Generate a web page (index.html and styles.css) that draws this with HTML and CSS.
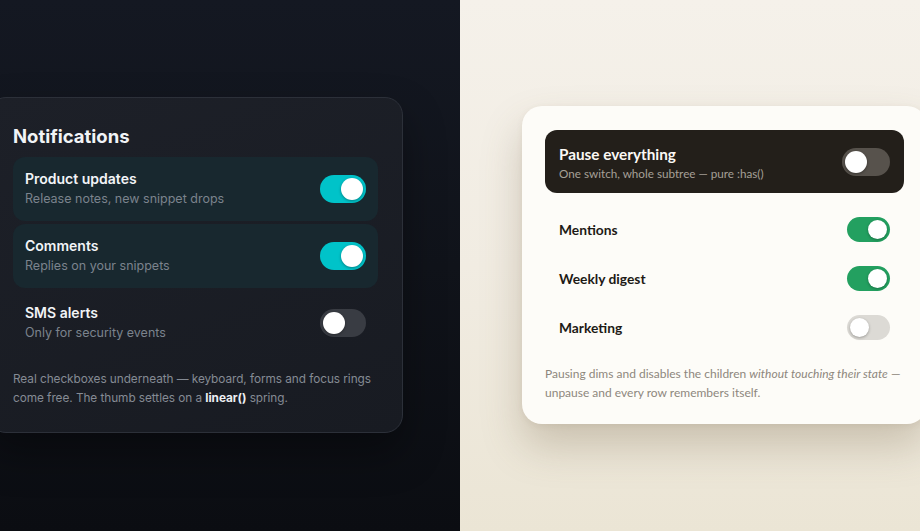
FILE: index.html
```html
<!DOCTYPE html>
<html>
<head>
<meta charset="utf-8">
<link rel="stylesheet" href="styles.css">
</head>
<body>
<main class="stage">
  <section class="panel panel-dark">
    <div class="card-dark">
      <h2 class="title">Notifications</h2>
      <div class="rows">
        <div class="row row-on">
          <div class="row-text">
            <div class="label">Product updates</div>
            <div class="desc">Release notes, new snippet drops</div>
          </div>
          <span class="sw sw-teal on"><span class="thumb"></span></span>
        </div>
        <div class="row row-on">
          <div class="row-text">
            <div class="label">Comments</div>
            <div class="desc">Replies on your snippets</div>
          </div>
          <span class="sw sw-teal on"><span class="thumb"></span></span>
        </div>
        <div class="row">
          <div class="row-text">
            <div class="label">SMS alerts</div>
            <div class="desc">Only for security events</div>
          </div>
          <span class="sw sw-teal"><span class="thumb"></span></span>
        </div>
      </div>
      <p class="note">Real checkboxes underneath — keyboard, forms and focus rings come free. The thumb settles on a <b class="code">linear()</b> spring.</p>
    </div>
  </section>
  <section class="panel panel-light">
    <div class="card-light">
      <div class="master">
        <div class="row-text">
          <div class="m-label">Pause everything</div>
          <div class="m-desc">One switch, whole subtree — pure :has()</div>
        </div>
        <span class="sw sw-master"><span class="thumb"></span></span>
      </div>
      <div class="lrows">
        <div class="lrow"><span class="l-label">Mentions</span><span class="sw sw-green on"><span class="thumb"></span></span></div>
        <div class="lrow"><span class="l-label">Weekly digest</span><span class="sw sw-green on"><span class="thumb"></span></span></div>
        <div class="lrow"><span class="l-label">Marketing</span><span class="sw sw-green"><span class="thumb"></span></span></div>
      </div>
      <p class="lnote">Pausing dims and disables the children <i>without touching their state</i> — unpause and every row remembers itself.</p>
    </div>
  </section>
</main>
</body>
</html>
```
FILE: styles.css
```css
* { box-sizing: border-box; }
html, body { margin: 0; padding: 0; }
body { width: 920px; height: 531px; overflow: hidden; }
.stage { display: grid; grid-template-columns: 460px 460px; height: 531px; }
.panel { display: flex; align-items: center; overflow: hidden; }
.panel-dark {
  background: linear-gradient(180deg, #141822 0%, #10131a 50%, #0b0d12 100%);
  font-family: Inter, "DejaVu Sans", sans-serif;
}
.panel-light {
  background: linear-gradient(180deg, #f5f1ea 0%, #f1ece2 50%, #ebe5d5 100%);
  font-family: Lato, "Open Sans", sans-serif;
}

/* dark card */
.card-dark {
  flex: none;
  width: 415px;
  margin-left: -12px;
  margin-top: -2px;
  padding: 25px 24px 23px 24px;
  background: linear-gradient(160deg, #1d2028 0%, #181b22 100%);
  border: 1px solid #2c3039;
  border-radius: 18px;
  box-shadow: 0 20px 40px rgba(0,0,0,0.35);
}
.title {
  margin: 0 0 8px;
  font-size: 18.5px;
  line-height: 26px;
  font-weight: 700;
  color: #f1f3f6;
}
.rows { display: flex; flex-direction: column; gap: 3px; }
.row {
  display: flex; align-items: center; justify-content: space-between;
  padding: 12px 12px;
  border-radius: 12px;
  height: 64px;
}
.row-on { background: #18282f; }
.label { font-size: 14px; line-height: 20px; font-weight: 600; color: #f2f4f7; }
.desc { font-size: 12.5px; line-height: 19px; color: #7b838d; }
.note {
  margin: 15px 0 0;
  font-size: 11.8px;
  letter-spacing: -0.05px;
  line-height: 19.5px;
  color: #858b94;
}
.note .code { color: #eceef2; font-weight: 700; }

/* switches */
.sw { position: relative; flex: none; display: inline-block; border-radius: 999px; }
.sw .thumb { position: absolute; top: 3px; left: 3px; border-radius: 50%; background: #fff; }
.sw-teal { width: 46px; height: 28px; background: #393c43; }
.sw-teal .thumb { width: 22px; height: 22px; box-shadow: 0 1px 3px rgba(0,0,0,0.35); }
.sw-teal.on { background: #00c3c9; }
.sw-teal.on .thumb { left: 21px; }

.sw-master { width: 48px; height: 28px; background: #57524c; }
.sw-master .thumb { width: 22px; height: 22px; box-shadow: 0 1px 3px rgba(0,0,0,0.4); }

.sw-green { width: 43px; height: 25px; background: #dcdad5; }
.sw-green .thumb { top: 3px; left: 3px; width: 19px; height: 19px; box-shadow: 0 1px 3px rgba(0,0,0,0.3); }
.sw-green.on { background: #23a060; }
.sw-green.on .thumb { left: 21px; }

/* light card */
.card-light {
  flex: none;
  width: 405px;
  margin-left: 62px;
  margin-top: -1px;
  padding: 24px 23px 22px 23px;
  background: #fdfcf8;
  border-radius: 20px;
  box-shadow: 0 22px 40px rgba(110,95,65,0.28), 0 2px 6px rgba(110,95,65,0.08);
}
.master {
  display: flex; align-items: center; justify-content: space-between;
  height: 63px;
  padding: 3px 14px 0;
  background: #231f1a;
  border-radius: 12px;
}
.master .sw { margin-top: -3px; }
.m-label { font-size: 15.3px; line-height: 20px; font-weight: 700; color: #fbf9f5; }
.m-desc { font-size: 11.7px; line-height: 18px; color: #a6a097; }
.lrows { margin-top: 12px; display: flex; flex-direction: column; }
.lrow {
  display: flex; align-items: center; justify-content: space-between;
  height: 49px;
  padding: 0 14px;
}
.l-label { font-size: 13.8px; font-weight: 700; color: #1d1a16; }
.lnote {
  margin: 12px 0 0;
  font-size: 12px;
  line-height: 19px;
  color: #8e877d;
}
.lnote i { font-style: italic; }
```
